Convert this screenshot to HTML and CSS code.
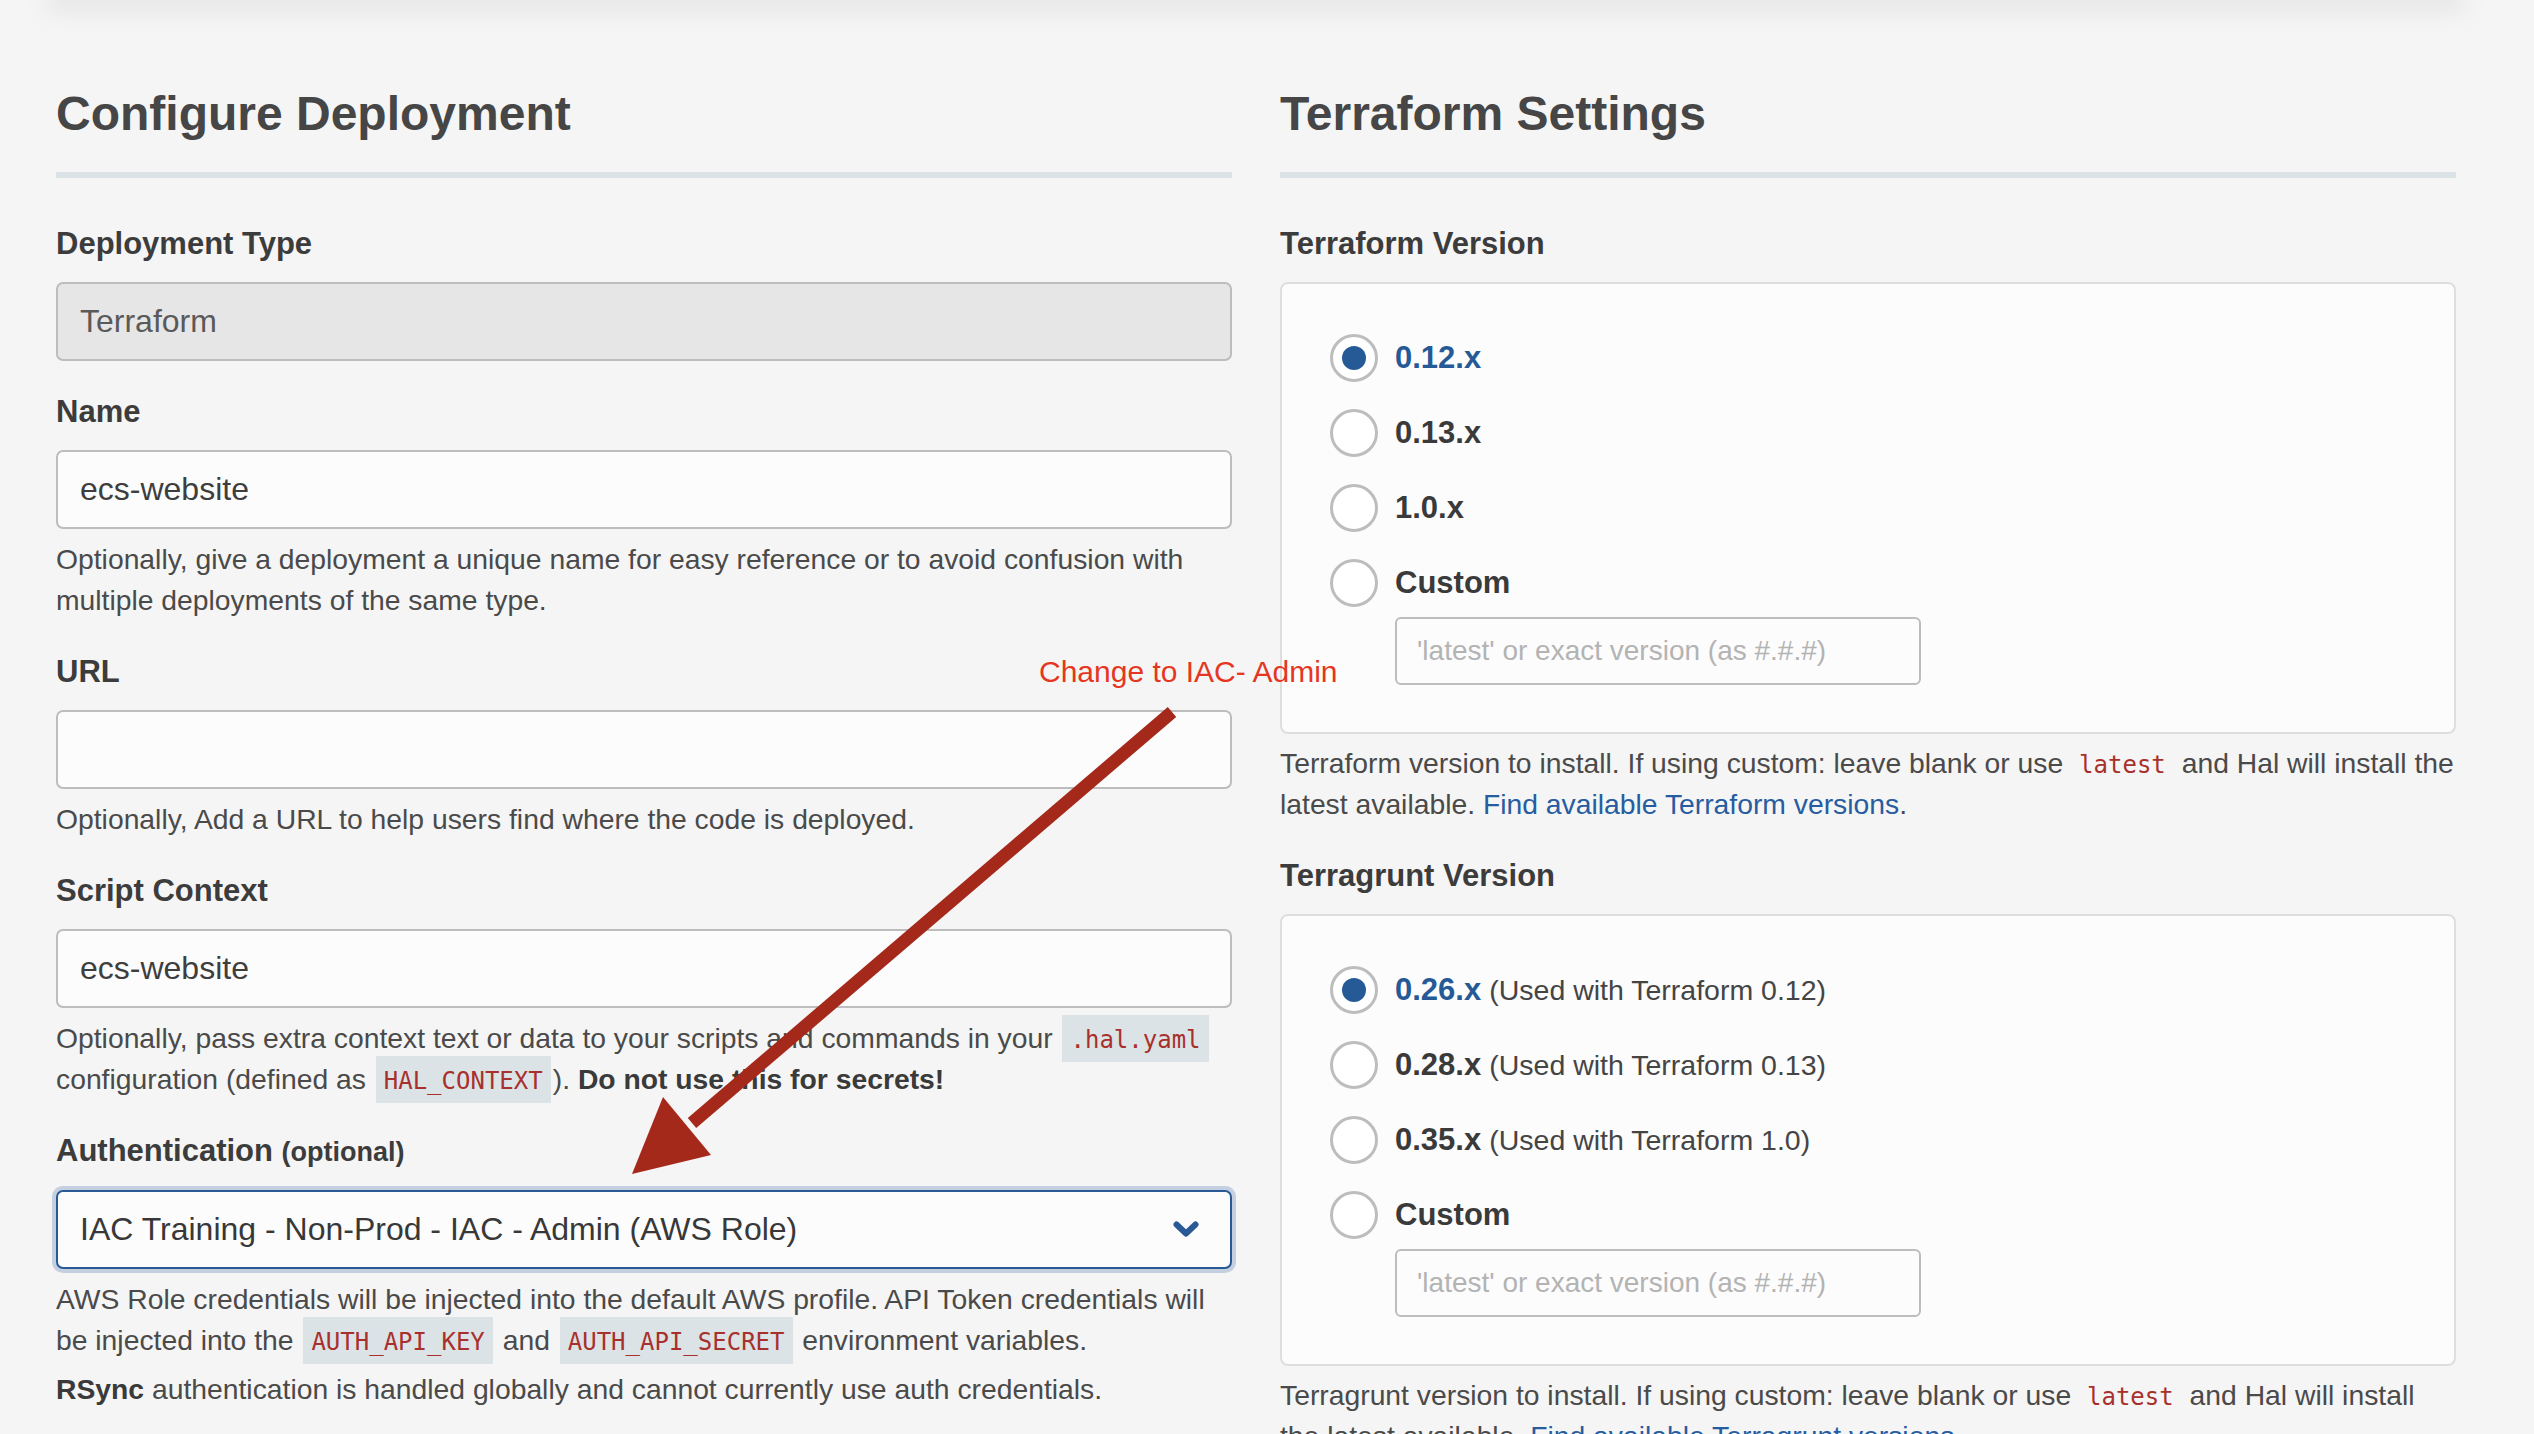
FILE: index.html
```html
<!DOCTYPE html>
<html lang="en">
<head>
<meta charset="utf-8">
<title>Configure Deployment</title>
<link rel="stylesheet" href="styles.css">
</head>
<body>
<div class="topbar"></div>
<main class="page">
  <section class="col">
    <h2 class="title">Configure Deployment</h2>

    <div class="group">
      <label class="label">Deployment Type</label>
      <input class="field field-disabled" type="text" value="Terraform" disabled>
    </div>

    <div class="group">
      <label class="label">Name</label>
      <input class="field" type="text" value="ecs-website">
      <p class="help">Optionally, give a deployment a unique name for easy reference or to avoid confusion with multiple deployments of the same type.</p>
    </div>

    <div class="group">
      <label class="label">URL</label>
      <input class="field" type="text" value="">
      <p class="help">Optionally, Add a URL to help users find where the code is deployed.</p>
    </div>

    <div class="group">
      <label class="label">Script Context</label>
      <input class="field" type="text" value="ecs-website">
      <p class="help">Optionally, pass extra context text or data to your scripts and commands in your <code class="code">.hal.yaml</code> configuration (defined as <code class="code">HAL_CONTEXT</code>). <strong>Do not use this for secrets!</strong></p>
    </div>

    <div class="group">
      <label class="label">Authentication <span class="label-opt">(optional)</span></label>
      <div class="select">
        <span class="select-text">IAC Training - Non-Prod - IAC - Admin (AWS Role)</span>
        <svg class="chevron" width="26" height="17" viewBox="0 0 26 17"><polyline points="3.5,3.5 13,12.5 22.5,3.5" fill="none" stroke="#2a5a96" stroke-width="6" stroke-linecap="round" stroke-linejoin="round"/></svg>
      </div>
      <p class="help">AWS Role credentials will be injected into the default AWS profile. API Token credentials will be injected into the <code class="code">AUTH_API_KEY</code> and <code class="code">AUTH_API_SECRET</code> environment variables.</p>
      <p class="help help-gap"><strong>RSync</strong> authentication is handled globally and cannot currently use auth credentials.</p>
    </div>
  </section>

  <section class="col">
    <h2 class="title">Terraform Settings</h2>

    <div class="group">
      <label class="label">Terraform Version</label>
      <div class="box">
        <div class="radios">
          <div class="radio-row"><span class="radio checked"></span><span class="radio-label active">0.12.x</span></div>
          <div class="radio-row"><span class="radio"></span><span class="radio-label">0.13.x</span></div>
          <div class="radio-row"><span class="radio"></span><span class="radio-label">1.0.x</span></div>
          <div class="radio-row"><span class="radio"></span><span class="radio-label">Custom</span></div>
        </div>
        <input class="custom-field" type="text" placeholder="'latest' or exact version (as #.#.#)">
      </div>
      <p class="help help-box">Terraform version to install. If using custom: leave blank or use <code class="code-plain">latest</code> and Hal will install the latest available. <a class="link" href="#">Find available Terraform versions</a>.</p>
    </div>

    <div class="group">
      <label class="label">Terragrunt Version</label>
      <div class="box">
        <div class="radios">
          <div class="radio-row"><span class="radio checked"></span><span class="radio-label active">0.26.x</span><span class="radio-sub">(Used with Terraform 0.12)</span></div>
          <div class="radio-row"><span class="radio"></span><span class="radio-label">0.28.x</span><span class="radio-sub">(Used with Terraform 0.13)</span></div>
          <div class="radio-row"><span class="radio"></span><span class="radio-label">0.35.x</span><span class="radio-sub">(Used with Terraform 1.0)</span></div>
          <div class="radio-row"><span class="radio"></span><span class="radio-label">Custom</span></div>
        </div>
        <input class="custom-field" type="text" placeholder="'latest' or exact version (as #.#.#)">
      </div>
      <p class="help help-box">Terragrunt version to install. If using custom: leave blank or use <code class="code-plain">latest</code> and Hal will install the latest available. <a class="link" href="#">Find available Terragrunt versions</a>.</p>
    </div>
  </section>
</main>

<div class="annotation">Change to IAC- Admin</div>
<svg class="arrow" width="2534" height="1434" viewBox="0 0 2534 1434">
  <line x1="1172" y1="712" x2="692" y2="1123" stroke="#a5291b" stroke-width="13"/>
  <polygon points="632,1174 663,1097 711,1155" fill="#a5291b"/>
</svg>
</body>
</html>
```

FILE: styles.css
```css
html, body {
  margin: 0;
  padding: 0;
}

body {
  position: relative;
  background: #f5f5f5;
  font-family: "Liberation Sans", Arial, sans-serif;
  color: #464646;
  overflow: hidden;
  min-height: 1434px;
}

.topbar {
  height: 0;
  width: 2400px;
  margin-left: 56px;
  box-shadow: 0 0 26px 10px rgba(0, 0, 0, 0.08);
}

.page {
  display: grid;
  grid-template-columns: 1176px 1176px;
  column-gap: 48px;
  margin-left: 56px;
  padding-top: 86px;
}

.col {
  display: flex;
  flex-direction: column;
}

.title {
  margin: 0 0 48px;
  font-size: 48px;
  line-height: 56px;
  font-weight: 700;
  color: #464646;
  padding-bottom: 30px;
  border-bottom: 6px solid #dbe2e6;
}

.group + .group {
  margin-top: 33px;
}

.label {
  display: block;
  font-size: 31px;
  line-height: 36px;
  font-weight: 700;
  color: #3c3c3c;
  margin-bottom: 20px;
}

.label-opt {
  font-size: 27px;
}

.field {
  display: block;
  box-sizing: border-box;
  width: 100%;
  height: 79px;
  margin: 0;
  padding: 0 22px;
  border: 2px solid #bdbdbd;
  border-radius: 7px;
  background: #fcfcfc;
  font-family: "Liberation Sans", Arial, sans-serif;
  font-size: 32px;
  color: #3e3e3e;
  outline: none;
}

.field-disabled {
  background: #e6e6e6;
  color: #5a5a5a;
  -webkit-text-fill-color: #5a5a5a;
  opacity: 1;
}

.help {
  margin: 10px 0 0;
  font-size: 28.3px;
  line-height: 41px;
  color: #4a4a4a;
}

.help strong {
  color: #3a3a3a;
}

.help-gap {
  margin-top: 8px;
}

.help-box {
  margin-top: 9px;
}

.code {
  font-family: "DejaVu Sans Mono", "Liberation Mono", monospace;
  font-size: 24px;
  line-height: 1;
  color: #a8302c;
  background: #dce3e6;
  padding: 11px 8px 8px;
  margin: 0 2px;
}

.code-plain {
  font-family: "DejaVu Sans Mono", "Liberation Mono", monospace;
  font-size: 24px;
  line-height: 1;
  color: #a8302c;
  margin: 0 8px;
}

.link {
  color: #275da0;
  text-decoration: none;
}

.select {
  box-sizing: border-box;
  height: 79px;
  display: flex;
  align-items: center;
  justify-content: space-between;
  padding: 0 31px 0 22px;
  border: 2px solid #2a5a96;
  border-radius: 7px;
  background: #fcfcfc;
  box-shadow: 0 0 0 4px #c4d0e0;
}

.select-text {
  font-size: 32px;
  color: #383838;
}

.chevron {
  display: block;
}

.box {
  box-sizing: border-box;
  border: 2px solid #dedede;
  border-radius: 8px;
  background: #fcfcfc;
  padding: 50px 48px 47px;
}

.radios {
  display: flex;
  flex-direction: column;
  gap: 27px;
}

.radio-row {
  display: flex;
  align-items: center;
  height: 48px;
}

.radio {
  position: relative;
  box-sizing: border-box;
  width: 48px;
  height: 48px;
  flex: none;
  border: 3px solid #bdbdbd;
  border-radius: 50%;
  background: #fff;
  margin-right: 17px;
}

.radio.checked::after {
  content: "";
  position: absolute;
  left: 9px;
  top: 9px;
  width: 24px;
  height: 24px;
  border-radius: 50%;
  background: #265a96;
}

.radio-label {
  font-size: 31px;
  font-weight: 700;
  color: #3a3a3a;
}

.radio-label.active {
  color: #265a96;
}

.radio-sub {
  font-size: 28.5px;
  color: #454545;
  margin-left: 8px;
}

.custom-field {
  display: block;
  box-sizing: border-box;
  width: 526px;
  height: 68px;
  margin: 10px 0 0 65px;
  padding: 0 20px;
  border: 2px solid #bdbdbd;
  border-radius: 6px;
  background: #fcfcfc;
  font-family: "Liberation Sans", Arial, sans-serif;
  font-size: 28px;
  color: #3e3e3e;
  outline: none;
}

.custom-field::placeholder {
  color: #b3b3b3;
}

.annotation {
  position: absolute;
  left: 1039px;
  top: 657px;
  font-size: 30px;
  line-height: 30px;
  color: #e5361f;
  white-space: nowrap;
}

.arrow {
  position: absolute;
  left: 0;
  top: 0;
  pointer-events: none;
}
```
